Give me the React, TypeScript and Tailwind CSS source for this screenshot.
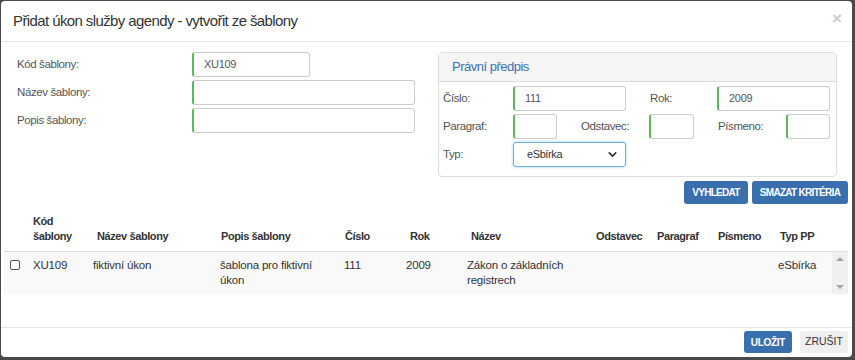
import { ChevronDown } from "lucide-react";

const font = { fontFamily: '"Liberation Sans", Arial, sans-serif' };

const cols = [
  { w: "w-[25px]", head: "", hp: "" },
  { w: "w-[60px]", head: "Kód šablony", hp: "pl-[4px]" },
  { w: "w-[127px]", head: "Název šablony", hp: "pl-[8px]" },
  { w: "w-[124px]", head: "Popis šablony", hp: "pl-[5px]" },
  { w: "w-[62px]", head: "Číslo", hp: "pl-[5px]" },
  { w: "w-[61px]", head: "Rok", hp: "pl-[8px]" },
  { w: "w-[125px]", head: "Název", hp: "pl-[8px]" },
  { w: "w-[61px]", head: "Odstavec", hp: "pl-[8px]" },
  { w: "w-[61px]", head: "Paragraf", hp: "pl-[8px]" },
  { w: "w-[64px]", head: "Písmeno", hp: "pl-[8px]" },
  { w: "w-[58px]", head: "Typ PP", hp: "pl-[6px]" },
];

const row = ["", "XU109", "fiktivní úkon", "šablona pro fiktivní úkon", "111", "2009", "Zákon o základních registrech", "", "", "", "eSbírka"];

function Input({ w, value = "" }: { w: string; value?: string }) {
  return (
    <div
      className={`${w} h-[25px] shrink-0 border border-[#ccc] border-l-2 border-l-[#5cb85c] rounded-[3px] bg-white flex items-center pl-[10px] text-[11px] tracking-[-0.3px] text-[#555]`}
    >
      {value}
    </div>
  );
}

export default function App() {
  return (
    <div className="w-[855px] h-[360px] bg-[#4a4a4a] pl-px pt-px pr-[3px] pb-[3px] overflow-hidden" style={font}>
      <div className="h-full bg-white rounded-[4px] flex flex-col text-[11.5px] text-[#333]">
        {/* header */}
        <div className="h-[41px] shrink-0 border-b border-[#e5e5e5] flex items-center justify-between pl-[12px] pr-[10px]">
          <div className="text-[15px] tracking-[-0.6px] text-[#333]">Přidat úkon služby agendy - vytvořit ze šablony</div>
          <div className="text-[17px] font-bold text-[#ccc] leading-none mt-[-6px]">×</div>
        </div>

        {/* body */}
        <div className="flex-1 flex flex-col pr-[4px]">
          <div className="flex pt-[10px]">
            <div className="w-[437px] shrink-0 pl-[16px] flex flex-col gap-[3px] text-[11.5px] tracking-[-0.4px]">
              <div className="flex items-center">
                <div className="w-[175px] text-[#555]">Kód šablony:</div>
                <Input w="w-[118px]" value="XU109" />
              </div>
              <div className="flex items-center">
                <div className="w-[175px] text-[#555]">Název šablony:</div>
                <Input w="w-[223px]" />
              </div>
              <div className="flex items-center">
                <div className="w-[175px] text-[#555]">Popis šablony:</div>
                <Input w="w-[223px]" />
              </div>
            </div>

            <div className="w-[399px] h-[125px] shrink-0 border border-[#ddd] rounded-[4px] flex flex-col">
              <div className="h-[29px] shrink-0 bg-[#f5f5f5] border-b border-[#ddd] flex items-center pl-[13px] text-[13px] tracking-[-0.5px] text-[#3a72b0]">
                Právní předpis
              </div>
              <div className="flex flex-col gap-[3px] pt-[4px] pl-[4px] text-[#555] text-[11.5px] tracking-[-0.4px]">
                <div className="flex items-center">
                  <div className="w-[70px]">Číslo:</div>
                  <Input w="w-[113px]" value="111" />
                  <div className="w-[67px] ml-[24px]">Rok:</div>
                  <Input w="w-[113px]" value="2009" />
                </div>
                <div className="flex items-center">
                  <div className="w-[70px]">Paragraf:</div>
                  <Input w="w-[44px]" />
                  <div className="w-[68px] ml-[24px]">Odstavec:</div>
                  <Input w="w-[45px]" />
                  <div className="w-[68px] ml-[24px]">Písmeno:</div>
                  <Input w="w-[44px]" />
                </div>
                <div className="flex items-center">
                  <div className="w-[70px]">Typ:</div>
                  <div className="w-[113px] h-[25px] border border-[#66afe9] rounded-[3px] shadow-[0_0_3px_rgba(102,175,233,0.6)] flex items-center justify-between pl-[13px] pr-[6px] text-[11px] text-[#333]">
                    <span>eSbírka</span>
                    <ChevronDown size={13} strokeWidth={3} className="text-[#333]" />
                  </div>
                </div>
              </div>
            </div>
          </div>

          <div className="flex justify-end gap-[4px] mt-[4px]">
            <div className="h-[23px] w-[64px] bg-[#3a6fae] rounded-[3px] text-white text-[10px] tracking-[-0.7px] font-bold flex items-center justify-center">VYHLEDAT</div>
            <div className="h-[23px] w-[96px] bg-[#3a6fae] rounded-[3px] text-white text-[10px] tracking-[-0.7px] font-bold flex items-center justify-center">SMAZAT KRITÉRIA</div>
          </div>

          {/* table */}
          <div className="ml-[3px] mt-[10px]">
            <div className="flex items-end border-b border-[#ddd] pb-[7px] font-bold text-[11px] tracking-[-0.4px] leading-[15px]">
              {cols.map((c, i) => (
                <div key={i} className={`${c.w} ${c.hp} shrink-0 ${i === 1 ? "pr-[14px]" : ""}`}>
                  {c.head}
                </div>
              ))}
            </div>
            <div className="flex bg-[#f9f9f9] h-[42px] text-[11.5px] tracking-[-0.2px]">
              {row.map((v, i) => (
                <div key={i} className={`${cols[i].w} shrink-0 pt-[6px] pl-[4px] pr-[4px] leading-[15px]`}>
                  {i === 0 ? (
                    <div className="ml-[2px] mt-[2px] w-[10px] h-[10px] border border-[#555] rounded-[2px] bg-white" />
                  ) : (
                    v
                  )}
                </div>
              ))}
              <div className="w-[16px] shrink-0 bg-[#f0f0f0] flex flex-col items-center justify-between py-[5px]">
                <div className="w-0 h-0 border-l-[4px] border-r-[4px] border-b-[4px] border-l-transparent border-r-transparent border-b-[#a3a3a3]" />
                <div className="w-0 h-0 border-l-[4px] border-r-[4px] border-t-[4px] border-l-transparent border-r-transparent border-t-[#a3a3a3]" />
              </div>
            </div>
          </div>
        </div>

        {/* footer */}
        <div className="h-[30px] shrink-0 border-t border-[#e5e5e5] flex justify-end items-start gap-[8px] pt-[3px] pr-[4px]">
          <div className="h-[22px] w-[48px] bg-[#3a6fae] rounded-[3px] text-white text-[10px] tracking-[-0.3px] font-bold flex items-center justify-center">ULOŽIT</div>
          <div className="h-[22px] w-[48px] bg-[#efefef] rounded-[3px] text-[#333] text-[10.5px] flex items-center justify-center">ZRUŠIT</div>
        </div>
      </div>
    </div>
  );
}
